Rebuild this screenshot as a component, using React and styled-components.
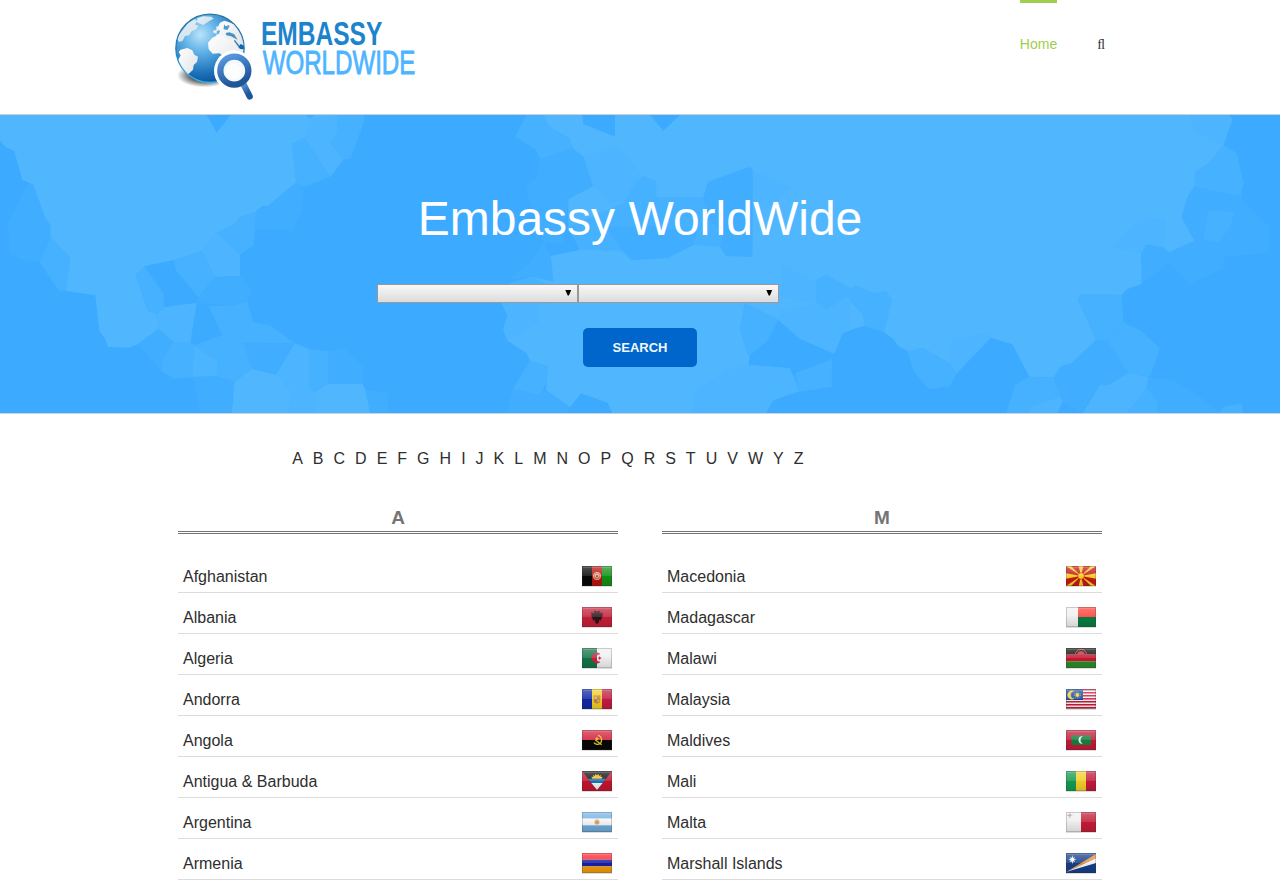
import React from 'react';
import styled, { createGlobalStyle } from 'styled-components';

const GlobalStyle = createGlobalStyle`
  * { box-sizing: border-box; }
  html, body { margin: 0; padding: 0; }
  body {
    background: #fff;
    color: #2e2e2e;
    font-family: "Liberation Sans", Arial, sans-serif;
    font-size: 16px;
    height: 880px;
    overflow: hidden;
  }
`;

const Header = styled.header`
  display: flex;
  justify-content: space-between;
  width: 930px;
  height: 114px;
  margin: 0 auto;
`;

const LogoSvg = styled.svg`
  width: 250px;
  height: 114px;
  overflow: visible;
`;

const Nav = styled.nav`
  display: flex;
  align-items: flex-start;
  gap: 40px;
`;

const NavLink = styled.a`
  border-top: 3px solid ${(p) => (p.$active ? '#a0ce4e' : 'transparent')};
  color: ${(p) => (p.$active ? '#a0ce4e' : '#333')};
  font-family: ${(p) => (p.$glyph ? '"Liberation Serif", serif' : 'inherit')};
  font-size: 14px;
  line-height: 83px;
  text-decoration: none;
`;

const Hero = styled.section`
  display: grid;
  height: 300px;
  border-top: 1px solid #cfcfcf;
  border-bottom: 1px solid #d0d3d6;
  background: #3caaff;
  overflow: hidden;
`;

const HeroArt = styled.svg`
  grid-area: 1 / 1;
  width: 1280px;
  height: 298px;
`;

const HeroContent = styled.div`
  grid-area: 1 / 1;
  z-index: 1;
  display: flex;
  flex-direction: column;
  align-items: center;
  padding-top: 74px;
`;

const Title = styled.h1`
  margin: 0;
  color: #fff;
  font-size: 48px;
  font-weight: 400;
  line-height: 60px;
`;

const SelectRow = styled.div`
  display: flex;
  width: 526px;
  margin: 35px 0 25px;
`;

const Select = styled.div`
  display: flex;
  justify-content: flex-end;
  align-items: flex-start;
  width: 201px;
  height: 19px;
  padding: 5px 5px 0 0;
  border: 1px solid #999;
  background: linear-gradient(#f8f8f8, #dcdcdc);
`;

const SearchButton = styled.button`
  width: 114px;
  height: 39px;
  padding: 0;
  border: 0;
  border-radius: 5px;
  background: #0066cc;
  color: #f2f9ff;
  font: bold 13px "Liberation Sans", Arial, sans-serif;
`;

const Letters = styled.div`
  display: flex;
  gap: 10px;
  width: 924px;
  margin: 34px auto 0;
  padding-left: 114.2px;
  line-height: 22px;
`;

const Columns = styled.main`
  display: grid;
  grid-template-columns: 440px 440px;
  gap: 44px;
  width: 924px;
  margin: 34px auto 0;
`;

const GroupTitle = styled.h2`
  margin: 0 0 18px;
  height: 30px;
  border-bottom: 3px double #747474;
  color: #747474;
  font-size: 19px;
  line-height: 27px;
  text-align: center;
`;

const CountryRow = styled.div`
  display: flex;
  justify-content: space-between;
  align-items: flex-start;
  height: 41px;
  padding: 14px 6px 0 5px;
  border-bottom: 1px solid #dcdcdc;
  line-height: 21px;
`;

const FlagSvg = styled.svg`
  width: 30px;
  height: 21px;
`;

const Logo = () => (
  <LogoSvg viewBox="30 0 750 342">
    <defs>
      <radialGradient id="sea" cx="0.36" cy="0.3" r="0.75">
        <stop offset="0" stopColor="#b9e4fa" />
        <stop offset="0.35" stopColor="#5fb0e6" />
        <stop offset="0.75" stopColor="#1d72ba" />
        <stop offset="1" stopColor="#0b4d91" />
      </radialGradient>
      <linearGradient id="rim" x1="0" y1="0" x2="0" y2="1">
        <stop offset="0" stopColor="#27719c" />
        <stop offset="0.5" stopColor="#247dbb" />
        <stop offset="1" stopColor="#35b4f0" />
      </linearGradient>
      <linearGradient id="land" x1="0" y1="0" x2="1" y2="1">
        <stop offset="0" stopColor="#fff" />
        <stop offset="1" stopColor="#dde0e3" />
      </linearGradient>
      <linearGradient id="lens" x1="0" y1="0" x2="0.4" y2="1">
        <stop offset="0" stopColor="#5b9be4" />
        <stop offset="1" stopColor="#1f5698" />
      </linearGradient>
      <radialGradient id="shade">
        <stop offset="0.5" stopColor="#222" stopOpacity="0.75" />
        <stop offset="1" stopColor="#222" stopOpacity="0" />
      </radialGradient>
      <clipPath id="globe"><circle cx="135" cy="145" r="101" /></clipPath>
    </defs>
    <ellipse cx="118" cy="226" rx="82" ry="36" fill="url(#shade)" />
    <circle cx="135" cy="145" r="102.5" fill="url(#sea)" stroke="url(#rim)" strokeWidth="4" />
    <g clipPath="url(#globe)" fill="url(#land)">
      <path d="M55 88l14-18 20-12 8 4-7 12 10 2-6 12-14 6-8 12-12 2-7 14-11 4-6-10 8-14z" opacity="0.85" />
      <path d="M97 55l18-6 24 1 7 6-13 7-18 12-10-4-9-4z" opacity="0.85" />
      <path d="M47 149l20-5 15 7 6 13 11 6-3 16-10 9-2 14-13 12-7 13-9-1-5-22-8-16-2-16 7-13-6-10z" />
      <path d="M165 68l13-6 10 3 20 8 12 18 15 22 4 25-12-6-8 10-9-8-6 4-16-20-7-4-7 5-17-7-4-8 9-3 3-9-9-6z" />
      <path d="M144 92l12-3-1 12-9-2zM154 79l5 1 4 11-9 3z" />
      <path d="M142 113l17-8 17 4 17 10 15-2 8 20 9 10 12 1-5 17-14 18-10 29-16 4-12-22-4-25-13-9-20 1-12-13-2-20z" />
      <path d="M177 73q6 11 12 2l5 3-7 12-11-2z" fill="#4a9bd2" />
      <path d="M182 99l11-2 14 5 11 17-12-6-8-4-14-3z" fill="#4a91c4" />
      <path d="M209 119l15 19-4 2-13-17z" fill="#337eb7" />
    </g>
    <circle cx="208" cy="212" r="61" fill="#fff" />
    <path d="M232 250l20 38" stroke="#fff" strokeWidth="29" />
    <path d="M233 248l21 41" stroke="url(#lens)" strokeWidth="19" strokeLinecap="round" />
    <circle cx="208" cy="212" r="42" fill="#f3f9fb" stroke="url(#lens)" strokeWidth="19" />
    <circle cx="206" cy="214" r="24" fill="#fcfdfd" />
    <text x="288" y="134.5" fill="#1c83cd" fontWeight="700" fontFamily="Liberation Sans Narrow, Liberation Sans, sans-serif" fontSize="97" textLength="364" lengthAdjust="spacingAndGlyphs">EMBASSY</text>
    <text x="293" y="222.5" fill="#4db4ff" stroke="#4db4ff" strokeWidth="2.4" fontFamily="Liberation Sans Narrow, Liberation Sans, sans-serif" fontSize="97" textLength="458" lengthAdjust="spacingAndGlyphs">WORLDWIDE</text>
  </LogoSvg>
);

const LIGHT = '#50b7ff';
const SOFT = '#4db4ff';
const MID = '#46b1ff';
const DIM = '#40adff';

// Facets of the mosaic, in three side-by-side panels: [colour, points]
const panels = [
  {
    x: 0,
    facets: [
      [DIM, '82,222 100,224 135,322 152,348 152,382 118,456 70,450 28,430 25,340'],
      [DIM, '25,340 140,330 152,348 152,370 28,409'],
      [MID, '152,382 211,443 196,542 178,544 118,456'],
      [DIM, '888,217 912,232 905,300 875,375 862,357 765,360 760,407 720,433 650,368 767,305 803,289'],
      [MID, '650,368 704,342 721,321 767,305 760,407 720,433'],
      [MID, '915,82 990,200 912,232 888,217 875,102'],
      [DIM, '645,501 720,497 753,540 743,575 697,588 590,578 595,562'],
      [MID, '406,495 432,469 490,550 493,592 470,612 443,602'],
      [MID, '527,480 521,450 605,423 645,501 595,562'],
      [DIM, '475,656 520,696 583,705 668,675 730,700 885,700 827,795 756,777 704,815 650,799 520,806 484,783 413,703'],
      [MID, '520,696 571,698 583,705 577,801 520,806 484,783 490,745'],
      [MID, '625,588 697,588 668,675'],
      [MID, '697,588 743,575 759,635 813,647 885,700 720,698 668,675'],
      [MID, '650,799 652,755 583,705 668,675 730,700 756,777 704,815'],
      [SOFT, '583,705 652,755 650,799 577,801'],
      [DIM, '577,801 650,799 704,815 696,910 600,910'],
      [MID, '927,717 985,724 985,822 947,846 927,838'],
      [DIM, '985,724 1035,713 1090,772 1090,822 985,822'],
      [DIM, '1093,838 1165,848 1165,910 1110,910'],
      [LIGHT, '0,15 620,15 650,68 692,15 1093,15 1088,45 1050,147 1031,147 991,200 915,82 875,102 888,217 803,289 788,287 767,305 721,321 704,342 650,368 605,423 521,450 432,469 406,495 443,602 470,612 475,656 413,703 388,713 324,711 315,685 298,664 286,556 196,542 211,443 152,382 152,348 135,322 100,224 67,209 43,124 18,112 0,92'],
      [SOFT, '605,423 650,368 720,433 720,497 645,501'],
      [SOFT, '493,592 590,578 571,698 520,696 475,656 470,612'],
      [SOFT, '696,910 704,815 756,777 827,795 885,700 927,717 927,838 947,846 985,822 1088,822 1095,838 1110,910'],
      [LIGHT, '704,815 756,777 827,795 870,840 865,910 696,910'],
      [LIGHT, '947,846 985,822 1088,822 1095,838 1110,910 950,910'],
      [SOFT, '930,26 1012,15 1012,65 990,100 1031,147 991,200 915,82'],
      [MID, '1012,15 1093,15 1088,45 1050,147 1031,147 990,100 1012,65'],
      [DIM, '918,15 945,15 930,26'],
    ],
  },
  {
    x: 1260,
    facets: [
      [DIM, '360,148 458,114 490,140 520,228 445,268 430,400 372,400 320,250 318,225 350,205'],
      [MID, '320,15 370,15 388,50 450,85 458,114 360,148 348,120 285,80'],
      [DIM, '372,400 393,438 400,515 335,500 265,510 330,455'],
      [LIGHT, '370,15 487,15 490,42 585,80 585,15 690,15 730,62 780,15 1292,15 1292,660 1268,670 1242,731 1138,685 1075,630 975,580 960,660 990,735 985,765 1110,775 1138,843 1060,870 1037,910 577,910 563,878 483,850 450,892 378,840 383,768 330,752 320,730 262,692 250,658 262,615 245,580 270,520 335,500 400,515 393,438 480,420 445,350 445,268 520,228 490,140 458,114 450,85 388,50'],
      [SOFT, '490,140 590,110 615,130 670,200 640,270 570,280 520,228'],
      [MID, '610,280 645,220 670,198 708,213 710,262 850,262 865,215 990,170 998,180 997,440 918,438 900,410 820,405 745,443 635,451 605,422 480,420 445,350'],
      [SOFT, '998,180 1115,233 1060,285 997,300'],
      [DIM, '850,262 865,215 990,170 998,180 997,440 918,438 900,410 910,370 870,330'],
      [DIM, '610,425 560,350 700,350 830,365 820,405 745,443 635,451'],
      [MID, '270,520 335,500 375,520 375,580 245,580'],
      [SOFT, '245,580 355,580 355,640 262,692 250,658 262,615'],
      [SOFT, '1090,465 1155,500 1187,512 1185,580 1080,560'],
      [MID, '1187,512 1218,493 1292,535 1292,560 1218,600 1187,575'],
      [MID, '975,580 1040,612 1075,630 1040,695 985,740 960,660'],
      [SOFT, '1075,630 1080,600 1187,580 1218,600 1280,560 1292,570 1292,660 1268,670 1242,731 1138,685'],
      [MID, '1125,790 1235,748 1235,830 1138,845'],
      [SOFT, '985,765 1110,775 1138,843 1060,870 1037,910 820,910 820,845 920,780'],
      [MID, '330,752 383,768 378,820 360,855 278,838'],
      [DIM, '278,838 360,855 378,840 450,892 440,910 260,910'],
    ],
  },
  {
    x: 2550,
    facets: [
      [MID, '1120,105 1160,128 1181,220 1172,260 1033,230 1037,183 1075,162'],
      [DIM, '1172,260 1215,310 1258,350 1255,430 1120,440 1033,392 995,322 1013,258 1033,230'],
      [MID, '1075,302 1155,305 1140,350 1107,398 1060,390'],
      [DIM, '873,430 890,403 938,412 958,427 955,460 875,522'],
      [DIM, '958,427 1033,392 1107,398 1125,440 1120,475 1020,523 955,460'],
      [MID, '692,551 815,555 820,637 770,690 738,690 683,568'],
      [DIM, '664,760 738,690 770,690 835,790 775,825 750,825 695,908 640,880 610,803 633,769'],
      [MID, '770,690 820,637 870,660 930,715 900,800 835,790'],
      [DIM, '890,800 970,810 1050,860 1110,910 920,910 890,835'],
      [LIGHT, '0,15 1138,15 1147,30 1120,105 1075,162 1037,183 1033,230 1013,258 995,322 1033,392 958,427 938,412 890,403 873,430 875,522 830,538 815,555 692,551 683,568 738,690 664,760 633,769 610,803 538,800 487,703 422,683 320,790 298,828 235,835 190,780 173,724 145,708 130,687 102,667 44,647 0,660'],
      [MID, '0,535 18,525 70,549 108,542 127,570 102,667 44,647 38,615 0,572'],
      [MID, '173,724 220,713 303,762 320,790 298,828 245,838 230,830 190,780'],
      [SOFT, '303,690 422,665 422,683 320,790 298,757'],
      [SOFT, '1020,15 1138,15 1147,30 1120,105 1030,65'],
      [SOFT, '780,410 865,330 945,325 945,410 958,427 938,412 890,403 873,430'],
      [MID, '495,825 538,800 610,803 638,875 625,910 468,910'],
      [SOFT, '545,890 630,860 638,875 620,910 535,910'],
      [SOFT, '750,825 775,825 835,790 895,800 890,835 830,910 697,910'],
      [MID, '890,835 920,870 922,910 830,910'],
      [MID, '1120,890 1175,880 1180,910 1107,910'],
    ],
  },
];

const Mosaic = () => (
  <HeroArt viewBox="0 0 1280 298">
    <g transform="translate(0 -5) scale(0.333333)">
      {panels.map((panel) => (
        <g key={panel.x} transform={`translate(${panel.x} 0)`}>
          {panel.facets.map(([color, points]) => (
            <polygon key={points} points={points} fill={color} />
          ))}
        </g>
      ))}
    </g>
  </HeroArt>
);

const Sun = ({ cx, cy, r, fill }) => (
  <g>
    <circle cx={cx} cy={cy} r={r} fill={fill} />
    <circle cx={cx} cy={cy} r={r * 1.5} fill="none" stroke={fill} strokeWidth="2" strokeDasharray="3 3" />
  </g>
);

const Bands = ({ colors, vertical }) => {
  const size = (vertical ? 90 : 60) / colors.length;
  return colors.map((c, i) => (
    <rect
      key={i}
      x={vertical ? i * size : 0}
      y={vertical ? 0 : i * size}
      width={vertical ? size : 90}
      height={vertical ? 60 : size}
      fill={c}
    />
  ));
};

const flags = {
  Afghanistan: (
    <>
      <Bands vertical colors={['#080808', '#b71410', '#119018']} />
      <circle cx="45" cy="30" r="11" fill="#c85c48" stroke="#e7a695" strokeWidth="3" />
      <path d="M38 33v-7l7-4 7 4v7l-7 3z" fill="#e5c4a4" />
      <path d="M42 27h6v6h-6z" fill="#b74b37" />
    </>
  ),
  Albania: (
    <>
      <Bands colors={['#c51f37']} />
      <path d="M45 15l-4-4-7 2 4 4-6 1-4-3v14l4 2-3 4 5 1-2 6 6-3 2 8 5 4 5-4 2-8 6 3-2-6 5-1-3-4 4-2V15l-4 3-6-1 4-4-7-2z" fill="#2b1519" />
    </>
  ),
  Algeria: (
    <>
      <Bands vertical colors={['#137346', '#f0f0f0']} />
      <path d="M54 18a15 15 0 1 0 0 24a12 12 0 1 1 0-24z" fill="#d21e3e" stroke="#d21e3e" strokeWidth="1.5" />
      <path d="M47 30l4-2 1-4 3 4 4 2-4 2-3 4-1-4z" fill="#d21e3e" />
    </>
  ),
  Andorra: (
    <>
      <Bands vertical colors={['#1028a6', '#f0ce22', '#c41b43']} />
      <path d="M34 21l6-4 5 4 5-4 6 4-2 19-9 4-9-4z" fill="#c78b38" />
      <path d="M38 23h6v7h-6zM46 32h6v6h-6z" fill="#e8b969" />
      <path d="M46 23h5v7h-5zM38 32h6v6h-6z" fill="#ac8057" />
    </>
  ),
  Angola: (
    <>
      <Bands colors={['#d31f39', '#080808']} />
      <path d="M48 16c15 4 13 25 1 27-6 1-11-2-13-5M40 30l19 14" fill="none" stroke="#e6c421" strokeWidth="4" />
      <path d="M45 20l2 4h4l-3 3 1 4-4-2-4 2 1-4-3-3h4z" fill="#e6c421" />
    </>
  ),
  'Antigua & Barbuda': (
    <>
      <Bands colors={['#c4142e']} />
      <path d="M0 0h90L45 57z" fill="#111" />
      <path d="M18 23h54L62 36H28z" fill="#1675bb" />
      <path d="M28 36h34L45 57z" fill="#f4f4f4" />
      <path d="M31 23l-3-6 6 1-1-6 6 3 1-6 5 4 5-4 1 6 6-3-1 6 6-1-3 6z" fill="#f2bb22" />
    </>
  ),
  Argentina: (
    <>
      <Bands colors={['#75b1e3', '#f5f5f5', '#6fa9d8']} />
      <circle cx="45" cy="30" r="8" fill="#e2b987" />
      <circle cx="45" cy="30" r="5" fill="#d09a4c" />
    </>
  ),
  Armenia: <Bands colors={['#ff252b', '#1820a5', '#f19a0a']} />,
  Macedonia: (
    <>
      <Bands colors={['#c9161b']} />
      <path d="M0 0h15l30 30L75 0h15L45 30zM38 0h14l-7 30zM0 22l45 8-45 8zM90 22v16l-45-8zM0 60l45-30 45 30H75L45 30 15 60zM38 60h14l-7-30z" fill="#f7d51b" />
      <circle cx="45" cy="30" r="10" fill="#f7d51b" stroke="#c9161b" strokeWidth="2" />
    </>
  ),
  Madagascar: (
    <>
      <rect width="36" height="60" fill="#f0f0f0" />
      <rect x="36" width="54" height="30" fill="#fc3f36" />
      <rect x="36" y="30" width="54" height="30" fill="#087b42" />
    </>
  ),
  Malawi: (
    <>
      <Bands colors={['#0b0b0b', '#ca1730', '#2c8b28']} />
      <path d="M28 20a17 16 0 0 1 34 0" fill="none" stroke="#c72c3d" strokeWidth="3" />
      <path d="M34 20a11 10 0 0 1 22 0z" fill="#c72c3d" />
    </>
  ),
  Malaysia: (
    <>
      <rect width="90" height="60" fill="#f5f5f5" />
      {[0, 1, 2, 3, 4, 5, 6].map((i) => (
        <rect key={i} y={i * 9} width="90" height="4.5" fill="#cc1739" />
      ))}
      <rect width="51" height="33" fill="#17479e" />
      <path d="M25 7a11 11 0 1 0 0 22a13 13 0 1 1 0-22z" fill="#eed138" stroke="#eed138" strokeWidth="1" />
      <Sun cx={34} cy={18} r={6} fill="#eed138" />
    </>
  ),
  Maldives: (
    <>
      <Bands colors={['#c71838']} />
      <rect x="16" y="16" width="59" height="29" fill="#15803e" />
      <path d="M49 19a11 11 0 1 0 0 22a13 13 0 0 1 0-22z" fill="#f4f4f4" stroke="#f4f4f4" strokeWidth="1" />
    </>
  ),
  Mali: <Bands vertical colors={['#149b4e', '#f2ce28', '#c4193b']} />,
  Malta: (
    <>
      <Bands vertical colors={['#f0f0f0', '#c21c36']} />
      <path d="M9 2h4v6h6v4h-6v6H9v-6H3V8h6z" fill="#cdb4b7" />
      <path d="M8 7h6v6H8z" fill="#b58f94" />
    </>
  ),
  'Marshall Islands': (
    <>
      <Bands colors={['#163f88']} />
      <path d="M0 57L90 3v13z" fill="#ee922f" />
      <path d="M0 57l90-41v14z" fill="#f5f5f5" />
      <path d="M19 6l2 9 6-3-3 6 8 2-8 2 3 6-6-3-2 9-2-9-6 3 3-6-8-2 8-2-3-6 6 3z" fill="#f7f9ff" />
    </>
  ),
};

const Flag = ({ name }) => (
  <FlagSvg viewBox="0 0 90 63">
    <rect y="58" width="90" height="5" fill="#bbb" opacity="0.5" />
    {flags[name]}
    <rect width="90" height="30" fill="url(#gloss)" />
    <rect width="90" height="60" fill="url(#flagShade)" />
    <rect x="1.5" y="1.5" width="87" height="57" fill="none" stroke="#333" strokeOpacity="0.22" strokeWidth="3" />
    <rect x="3" y="3" width="84" height="3" fill="#fff" opacity="0.15" />
  </FlagSvg>
);

const SharedPaint = styled.svg`
  display: block;
  width: 0;
  height: 0;
`;

const groups = [
  { letter: 'A', countries: ['Afghanistan', 'Albania', 'Algeria', 'Andorra', 'Angola', 'Antigua & Barbuda', 'Argentina', 'Armenia'] },
  { letter: 'M', countries: ['Macedonia', 'Madagascar', 'Malawi', 'Malaysia', 'Maldives', 'Mali', 'Malta', 'Marshall Islands'] },
];

const Dropdown = () => (
  <Select>
    <svg width="7" height="7" viewBox="0 0 7 7">
      <path d="M0.3 0H6.2L3.9 5.6H2.7z" fill="#000" />
    </svg>
  </Select>
);

export default function App() {
  return (
    <>
      <GlobalStyle />
      <SharedPaint>
        <defs>
          <linearGradient id="gloss" x1="0" y1="0" x2="0" y2="1">
            <stop offset="0" stopColor="#fff" stopOpacity="0.3" />
            <stop offset="1" stopColor="#fff" stopOpacity="0.12" />
          </linearGradient>
          <linearGradient id="flagShade" x1="0" y1="0" x2="0" y2="1">
            <stop offset="0.4" stopColor="#000" stopOpacity="0" />
            <stop offset="1" stopColor="#000" stopOpacity="0.12" />
          </linearGradient>
        </defs>
      </SharedPaint>
      <Header>
        <Logo />
        <Nav>
          <NavLink $active>Home</NavLink>
          <NavLink $glyph>{'\uFB02'}</NavLink>
        </Nav>
      </Header>
      <Hero>
        <Mosaic />
        <HeroContent>
          <Title>Embassy WorldWide</Title>
          <SelectRow>
            <Dropdown />
            <Dropdown />
          </SelectRow>
          <SearchButton>SEARCH</SearchButton>
        </HeroContent>
      </Hero>
      <Letters>
        {'ABCDEFGHIJKLMNOPQRSTUVWYZ'.split('').map((l) => (
          <span key={l}>{l}</span>
        ))}
      </Letters>
      <Columns>
        {groups.map((g) => (
          <section key={g.letter}>
            <GroupTitle>{g.letter}</GroupTitle>
            {g.countries.map((c) => (
              <CountryRow key={c}>
                <span>{c}</span>
                <Flag name={c} />
              </CountryRow>
            ))}
          </section>
        ))}
      </Columns>
    </>
  );
}
